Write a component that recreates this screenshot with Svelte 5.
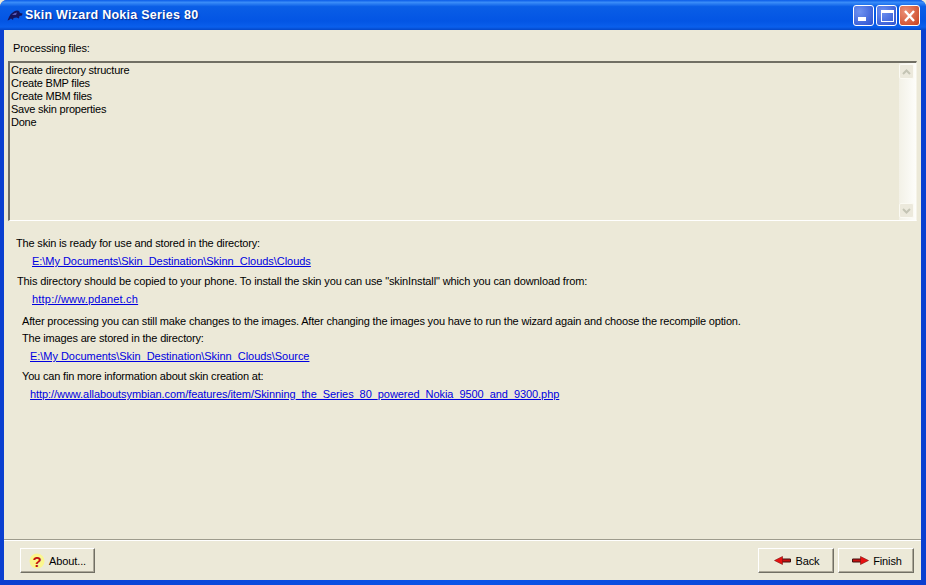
<script>
	const log = [
		"Create directory structure",
		"Create BMP files",
		"Create MBM files",
		"Save skin properties",
		"Done"
	];
</script>

<div class="window">
	<div class="titlebar">
		<svg class="app-icon" width="16" height="12" viewBox="0 0 16 12">
			<path d="M0.5 10.5 L2 7 Q4 3 7 1.5 Q10 0 12 1 L13 3 L15.5 3.5 L15 5.5 L12.5 6 L12 8.5 L9.5 7.5 L6.5 8 L6 10 L4 8.5 L2 10 Z" fill="#14145e" />
			<path d="M5 5 Q7 2.5 10 2.5 L9 5 Z" fill="#5a5ab8" />
		</svg>
		<span class="title">Skin Wizard Nokia Series 80</span>
		<div class="controls">
			<div class="ctl">
				<svg width="21" height="21" viewBox="0 0 21 21"><rect x="5" y="12" width="8" height="4" fill="#fff" /></svg>
			</div>
			<div class="ctl">
				<svg width="21" height="21" viewBox="0 0 21 21"><rect x="5.5" y="5.5" width="12" height="11" fill="none" stroke="#fff" /><rect x="5" y="5" width="13" height="3" fill="#fff" /></svg>
			</div>
			<div class="ctl close">
				<svg width="21" height="21" viewBox="0 0 21 21"><path d="M6 6l9 10M15 6l-9 10" stroke="#fff" stroke-width="2.4" /></svg>
			</div>
		</div>
	</div>

	<div class="body">
		<div class="main">
			<div class="heading">Processing files:</div>
			<div class="memo">
				<div class="lines">
					{#each log as line}
						<div>{line}</div>
					{/each}
				</div>
				<div class="scroll">
					<div class="sbtn"><svg width="9" height="6" viewBox="0 0 9 6"><path d="M1 5l3.5-3.5L8 5" fill="none" stroke="#c4c4b4" stroke-width="2" /></svg></div>
					<div class="sbtn"><svg width="9" height="6" viewBox="0 0 9 6"><path d="M1 1l3.5 3.5L8 1" fill="none" stroke="#c4c4b4" stroke-width="2" /></svg></div>
				</div>
			</div>

			<div class="info">
				<p class="t1">The skin is ready for use and stored in the directory:</p>
				<a class="l1" href="#a">E:\My Documents\Skin_Destination\Skinn_Clouds\Clouds</a>
				<p class="t2">This directory should be copied to your phone. To install the skin you can use "skinInstall" which you can download from:</p>
				<a class="l2" href="#a">http://www.pdanet.ch</a>
				<p class="t3">After processing you can still make changes to the images. After changing the images you have to run the wizard again and choose the recompile option.</p>
				<p class="t4">The images are stored in the directory:</p>
				<a class="l3" href="#a">E:\My Documents\Skin_Destination\Skinn_Clouds\Source</a>
				<p class="t5">You can fin more information about skin creation at:</p>
				<a class="l4" href="#a">http://www.allaboutsymbian.com/features/item/Skinning_the_Series_80_powered_Nokia_9500_and_9300.php</a>
			</div>
		</div>

		<div class="footer">
			<button class="btn about">
				<svg width="16" height="16" viewBox="0 0 16 16">
					<circle cx="8" cy="8" r="7.5" fill="#fbf68e" />
					<text x="8" y="13.5" text-anchor="middle" class="qmark">?</text>
				</svg>
				<span>About...</span>
			</button>
			<div class="right">
				<button class="btn nav">
					<svg width="17" height="9" viewBox="0 0 17 9"><path d="M7 3H16.5V6H7" fill="#c81010" stroke="#401010" stroke-width="1" /><path d="M0.5 4.5L8.5 0.5V8.5Z" fill="#e81010" stroke="#801010" stroke-width="0.6" /></svg>
					<span>Back</span>
				</button>
				<button class="btn nav">
					<svg width="17" height="9" viewBox="0 0 17 9"><path d="M10 3H0.5V6H10" fill="#c81010" stroke="#401010" stroke-width="1" /><path d="M16.5 4.5L8.5 0.5V8.5Z" fill="#e81010" stroke="#801010" stroke-width="0.6" /></svg>
					<span>Finish</span>
				</button>
			</div>
		</div>
	</div>
</div>

<style>
	:global(body) {
		margin: 0;
		background: #ece9d8;
	}
	* {
		box-sizing: border-box;
	}
	.window {
		width: 926px;
		height: 585px;
		display: flex;
		flex-direction: column;
		background: linear-gradient(90deg, #0a3fd0, #0a55e8 50%, #0a3fd0);
		border-radius: 7px 7px 0 0;
		padding: 0 4px 5px;
		font-family: "Liberation Sans", Arial, sans-serif;
		font-size: 11px;
		color: #000;
		overflow: hidden;
	}
	.titlebar {
		height: 30px;
		margin: 0 -4px;
		padding: 0 6px 0 7px;
		display: flex;
		align-items: center;
		background: linear-gradient(#0a5be8 0%, #3a8cf8 8%, #0a5ee6 22%, #0355e4 70%, #0a5fec 90%, #0347c8 100%);
	}
	.app-icon {
		flex: none;
		margin-right: 2px;
		margin-top: 1px;
	}
	.title {
		color: #fff;
		font-weight: bold;
		font-size: 12.5px;
		letter-spacing: 0.25px;
		font-family: "Liberation Sans", Arial, sans-serif;
		text-shadow: 1px 1px 1px #0a2a8a;
	}
	.controls {
		margin-left: auto;
		display: flex;
		gap: 2px;
	}
	.ctl {
		width: 21px;
		height: 21px;
		border: 1px solid #fff;
		border-radius: 3px;
		background: radial-gradient(circle at 30% 30%, #6f92f0, #2a50d0);
		overflow: hidden;
	}
	.ctl svg {
		display: block;
		margin: -1px;
	}
	.close {
		background: radial-gradient(circle at 30% 30%, #ec9078, #c8401c);
	}
	.body {
		flex: 1;
		display: flex;
		flex-direction: column;
		background: #ece9d8;
		min-height: 0;
		margin-right: 1px;
	}
	.main {
		flex: 1;
		padding-top: 12px;
		min-height: 0;
	}
	.heading {
		margin-left: 9px;
		height: 19px;
		letter-spacing: -0.2px;
	}
	.memo {
		margin-left: 4px;
		margin-right: 4px;
		height: 160px;
		display: flex;
		border-top: 2px solid #716f64;
		border-left: 2px solid #716f64;
		border-bottom: 1px solid #fff;
		border-right: 1px solid #f5f3e8;
	}
	.lines {
		flex: 1;
		padding: 1px 0 0 1px;
		line-height: 13px;
		letter-spacing: -0.22px;
	}
	.scroll {
		width: 17px;
		display: flex;
		flex-direction: column;
		justify-content: space-between;
		background: linear-gradient(90deg, #f3f1e7, #fdfdfa);
		padding: 1px 0 2px;
	}
	.sbtn {
		width: 15px;
		height: 15px;
		border: 1px solid #fbfaf3;
		border-radius: 2px;
		background: #ece9dc;
		display: flex;
		align-items: center;
		justify-content: center;
	}
	.info p {
		margin: 0;
		line-height: 13px;
		letter-spacing: -0.17px;
	}
	.info a {
		display: block;
		line-height: 13px;
		color: #0000e0;
		text-decoration: underline;
		letter-spacing: -0.035px;
	}
	.info .t2 { letter-spacing: -0.12px; }
	.info .l2 { letter-spacing: 0.2px; }
	.info .l4 { letter-spacing: -0.065px; }
	.t1 { padding: 16px 0 0 12px; }
	.l1 { padding: 5px 0 0 28px; }
	.t2 { padding: 7px 0 0 13px; }
	.l2 { padding: 5px 0 0 28px; }
	.t3 { padding: 9px 0 0 18px; }
	.t4 { padding: 4px 0 0 18px; }
	.l3 { padding: 5px 0 0 26px; }
	.t5 { padding: 7px 0 0 18px; }
	.l4 { padding: 5px 0 0 26px; }
	.footer {
		height: 41px;
		border-top: 1px solid #9d9b8c;
		box-shadow: inset 0 1px 0 #fff;
		padding: 8px 7px 0 16px;
		display: flex;
		justify-content: space-between;
		align-items: flex-start;
	}
	.right {
		display: flex;
		gap: 4px;
	}
	.btn {
		height: 25px;
		padding: 0;
		display: flex;
		align-items: center;
		justify-content: center;
		gap: 4px;
		font: inherit;
		background: #ece9d8;
		border: 1px solid;
		border-color: #fff #716f64 #716f64 #fff;
		box-shadow: inset -1px -1px 0 #aca899;
		letter-spacing: -0.1px;
	}
	.about {
		width: 75px;
	}
	.nav {
		width: 76px;
	}
	.nav svg {
		margin-left: 2px;
	}
	.qmark {
		font: bold 15px "Liberation Sans", Arial, sans-serif;
		fill: #c01010;
	}
</style>
